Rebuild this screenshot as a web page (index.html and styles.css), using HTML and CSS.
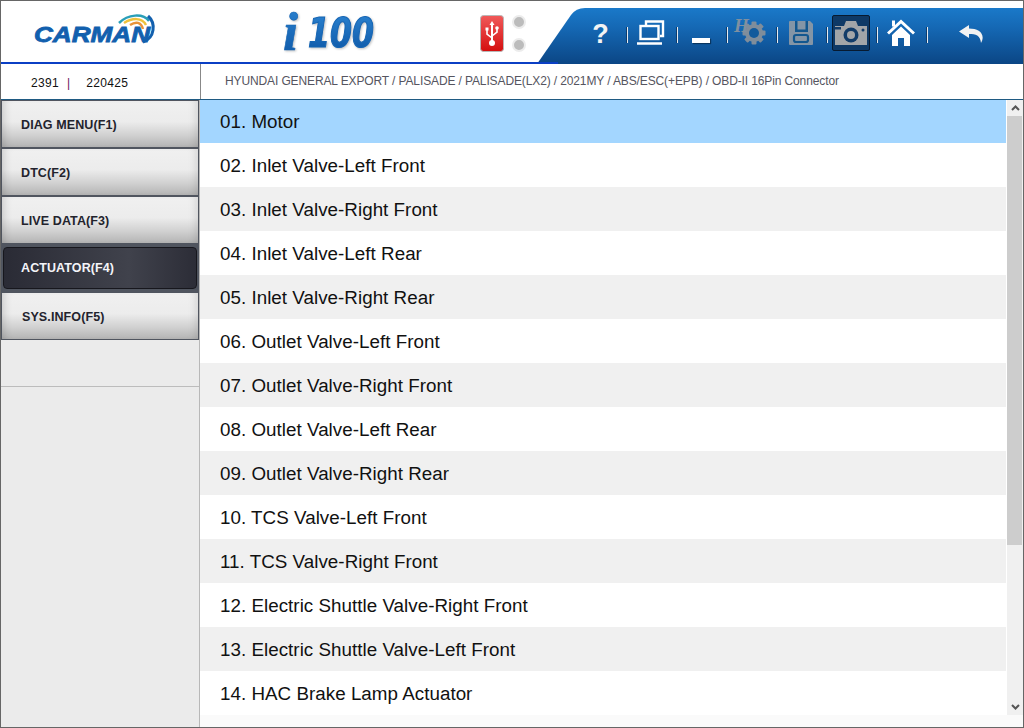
FILE: index.html
```html
<!DOCTYPE html>
<html lang="en">
<head>
<meta charset="utf-8">
<title>i100</title>
<link rel="stylesheet" href="styles.css">
</head>
<body>
<div class="window">
  <header class="header">
    <svg class="logo" width="124" height="32" viewBox="0 0 124 32">
      <path d="M86 9 C95 0 110 -1 116 7" class="arc-teal"/>
      <path d="M91 9 C99 4 109 3 113 11" class="arc-yellow"/>
      <path d="M97 11 C103 7 108 8 110 15" class="arc-orange"/>
      <path d="M115 2 C123 9 122 24 110 28" class="arc-blue"/>
      <text x="1" y="28" textLength="116" lengthAdjust="spacingAndGlyphs" class="logo-text">CARMAN</text>
    </svg>
    <svg class="product" width="102" height="60" viewBox="0 0 102 60">
      <defs>
        <linearGradient id="prodGrad" x1="0" y1="0" x2="0" y2="1">
          <stop offset="0" stop-color="#2c84d2"/>
          <stop offset="1" stop-color="#0c55a4"/>
        </linearGradient>
      </defs>
      <text x="1" y="48" class="prod-i" fill="url(#prodGrad)">i</text>
      <text x="26" y="45" textLength="66" lengthAdjust="spacingAndGlyphs" class="prod-num" fill="url(#prodGrad)">100</text>
    </svg>
    <svg class="usb" width="25" height="38" viewBox="0 0 25 38">
      <defs>
        <linearGradient id="usbGrad" x1="0" y1="0" x2="0" y2="1">
          <stop offset="0" stop-color="#f05a5a"/>
          <stop offset="1" stop-color="#d40e0e"/>
        </linearGradient>
      </defs>
      <rect x="0.5" y="0.5" width="23" height="36" rx="3" fill="url(#usbGrad)" stroke="#b8b8b8"/>
      <path d="M12 6 L9.5 10 H11 V26 H13 V10 H14.5 Z" fill="#fff"/>
      <path d="M12 23 L7 19 V15 M12 21 L17 17 V14" fill="none" stroke="#fff" stroke-width="1.6"/>
      <rect x="5.5" y="12.5" width="3" height="3" fill="#fff"/>
      <circle cx="17" cy="13" r="1.8" fill="#fff"/>
      <circle cx="12" cy="28" r="3" fill="#fff"/>
    </svg>
    <div class="leds"><span class="led"></span><span class="led"></span></div>
    <nav class="toolbar">
      <div class="tool sep"><span class="help">?</span></div>
      <div class="tool sep">
        <svg width="28" height="26" viewBox="0 0 28 26" fill="none" stroke="#fff" stroke-width="2.400">
          <path d="M9 5 V1.500 H26 V16 H23"/>
          <rect x="3.500" y="6" width="18" height="13"/>
          <path d="M0 23.500 H25" stroke-width="2.600"/>
        </svg>
      </div>
      <div class="tool sep"><span class="minimize"></span></div>
      <div class="tool sep">
        <svg width="38" height="36" viewBox="0 0 38 36">
          <g fill="#7f8d9b">
            <circle cx="22" cy="18" r="9"/>
            <rect x="19.500" y="6.500" width="5" height="23" rx="1"/>
            <rect x="10.500" y="15.500" width="23" height="5" rx="1"/>
            <rect x="19.500" y="6.500" width="5" height="23" rx="1" transform="rotate(45 22 18)"/>
            <rect x="19.500" y="6.500" width="5" height="23" rx="1" transform="rotate(-45 22 18)"/>
          </g>
          <circle cx="22" cy="18" r="5" fill="#125a9c"/>
          <text x="2" y="17" class="gear-h">H</text>
        </svg>
      </div>
      <div class="tool sep">
        <svg width="26" height="26" viewBox="0 0 26 26">
          <path d="M1 2 Q1 1 2 1 H22 L25 4 V24 Q25 25 24 25 H2 Q1 25 1 24 Z" fill="#8495a6"/>
          <rect x="7" y="1" width="13" height="11" fill="#13578f"/>
          <rect x="9.500" y="1" width="8" height="8.500" fill="#8495a6"/>
          <rect x="6" y="15" width="14" height="7" rx="2" fill="#8495a6" stroke="#13578f" stroke-width="2.200"/>
        </svg>
      </div>
      <div class="tool sep">
        <div class="cam-btn">
          <svg width="32" height="26" viewBox="0 0 32 26">
            <path d="M0 6 H9 L11 1 H21 L23 6 H32 V25 H0 Z" fill="#a2a5a8"/>
            <rect x="0" y="7" width="6" height="2.500" fill="#123c69"/>
            <circle cx="16" cy="15" r="7.500" fill="#123c69"/>
            <circle cx="16" cy="15" r="4" fill="#a2a5a8"/>
            <circle cx="28" cy="10" r="1.500" fill="#123c69"/>
          </svg>
        </div>
      </div>
      <div class="tool sep">
        <svg width="28" height="28" viewBox="0 0 28 28">
          <path d="M1 14.500 L14 2.500 L27 14.500" fill="none" stroke="#fff" stroke-width="3"/>
          <rect x="5" y="1.500" width="3" height="6" fill="#fff"/>
          <path d="M5 16 L14 7.500 L23 16 V27 H17 V19 H11 V27 H5 Z" fill="#fff"/>
        </svg>
      </div>
      <div class="tool back">
        <svg class="back-icon" width="26" height="20" viewBox="0 0 26 20">
          <path d="M10 0 L0 6.500 L10 13 V9 C17 9 21 10 22 18 C27 9 20 3.500 10 3.500 Z" fill="#f2f2f2"/>
        </svg>
      </div>
    </nav>
  </header>

  <div class="info">
    <div class="info-left">
      <span>2391</span><span class="pipe">|</span><span>220425</span>
    </div>
    <div class="crumb">HYUNDAI GENERAL EXPORT / PALISADE / PALISADE(LX2) / 2021MY / ABS/ESC(+EPB) / OBD-II 16Pin Connector</div>
  </div>

  <div class="content">
    <aside class="sidebar">
      <div class="menu">
        <div class="menu-item">DIAG MENU(F1)</div>
        <div class="menu-item">DTC(F2)</div>
        <div class="menu-item">LIVE DATA(F3)</div>
        <div class="menu-item active"><span class="active-inner">ACTUATOR(F4)</span></div>
        <div class="menu-item shifted">SYS.INFO(F5)</div>
      </div>
      <div class="side-gap"></div>
    </aside>
    <main class="main">
      <div class="list-wrap">
        <ul class="list">
          <li class="row selected">01. Motor</li>
          <li class="row">02. Inlet Valve-Left Front</li>
          <li class="row">03. Inlet Valve-Right Front</li>
          <li class="row">04. Inlet Valve-Left Rear</li>
          <li class="row">05. Inlet Valve-Right Rear</li>
          <li class="row">06. Outlet Valve-Left Front</li>
          <li class="row">07. Outlet Valve-Right Front</li>
          <li class="row">08. Outlet Valve-Left Rear</li>
          <li class="row">09. Outlet Valve-Right Rear</li>
          <li class="row">10. TCS Valve-Left Front</li>
          <li class="row">11. TCS Valve-Right Front</li>
          <li class="row">12. Electric Shuttle Valve-Right Front</li>
          <li class="row">13. Electric Shuttle Valve-Left Front</li>
          <li class="row">14. HAC Brake Lamp Actuator</li>
        </ul>
        <div class="scrollbar">
          <div class="arrow">
            <svg width="9" height="6" viewBox="0 0 9 6"><path d="M1 5 L4.500 1.500 L8 5" fill="none" stroke="#555" stroke-width="2"/></svg>
          </div>
          <div class="thumb"></div>
          <div class="track"></div>
          <div class="arrow">
            <svg width="9" height="6" viewBox="0 0 9 6"><path d="M1 1 L4.500 4.500 L8 1" fill="none" stroke="#555" stroke-width="2"/></svg>
          </div>
        </div>
      </div>
      <div class="strip"></div>
    </main>
  </div>
</div>
</body>
</html>
```

FILE: styles.css
```css
* { box-sizing: border-box; }
html, body { margin: 0; padding: 0; }
body { font-family: "Liberation Sans", Arial, sans-serif; background: #fff; }

.window {
  width: 1024px;
  height: 728px;
  border: 1px solid #666;
  display: flex;
  flex-direction: column;
  overflow: hidden;
  background: #fff;
}

/* header */
.header {
  position: relative;
  height: 63px;
  flex: none;
  display: flex;
  align-items: flex-start;
  background: #fff;
}
.header::after {
  content: "";
  position: absolute;
  left: 0;
  bottom: 0;
  width: 557px;
  height: 2px;
  background: #0b3fc4;
}
.logo { margin: 13px 0 0 32px; flex: none; overflow: visible; }
.logo-text {
  font-family: "Liberation Sans", sans-serif;
  font-weight: 700;
  font-style: italic;
  font-size: 22px;
  fill: #1260ae;
  stroke: #1260ae;
  stroke-width: 0.8px;
}
.arc-teal { fill: none; stroke: #2a9fb8; stroke-width: 2.500; }
.arc-yellow { fill: none; stroke: #eec23c; stroke-width: 2.500; }
.arc-orange { fill: none; stroke: #e8923a; stroke-width: 2.500; }
.arc-blue { fill: none; stroke: #1260ae; stroke-width: 3; }
.product {
  margin: 1px 0 0 125px;
  flex: none;
  overflow: visible;
  filter: drop-shadow(1px 1px 1px rgba(0,0,0,.25));
}
.prod-i {
  font-family: "Liberation Serif", serif;
  font-weight: 700;
  font-style: italic;
  font-size: 54px;
  stroke: #1565b4;
  stroke-width: 0.6px;
}
.prod-num {
  font-family: "DejaVu Sans", sans-serif;
  font-weight: 700;
  font-style: oblique;
  font-size: 40px;
  stroke: #1565b4;
  stroke-width: 1.200px;
}
.usb { margin: 14px 0 0 96px; flex: none; }
.leds {
  margin: 14px 0 0 7px;
  flex: none;
  display: flex;
  flex-direction: column;
  gap: 9px;
}
.led {
  width: 14px;
  height: 14px;
  border-radius: 50%;
  background: #bcbcbc;
  border: 2px solid #ececec;
}
.toolbar {
  margin: 7px 0 0 11px;
  flex: 1;
  height: 56px;
  display: flex;
  align-items: flex-start;
  padding: 7px 0 0 41px;
  background: linear-gradient(#1a79c9 0%, #1568b4 35%, #0b4685 100%);
  clip-path: path("M0 56 L34 7 Q39 0 48 0 L486 0 L486 56 Z");
}
.tool {
  position: relative;
  width: 50px;
  height: 36px;
  padding-right: 5px;
  display: flex;
  align-items: center;
  justify-content: center;
  flex: none;
}
.sep::after {
  content: "";
  position: absolute;
  right: 0;
  top: 12px;
  width: 1px;
  height: 16px;
  background: #e6ebf0;
  box-shadow: -1px 0 0 #0d3c6e;
}
.help {
  font-size: 27px;
  font-weight: 700;
  color: #f4f4f4;
  line-height: 36px;
  padding-top: 1px;
}
.minimize {
  width: 18px;
  height: 5px;
  margin-top: 14px;
  background: #fff;
  box-shadow: 1px 1px 1px rgba(0,0,0,.4);
}
.gear-h {
  font-family: "Liberation Serif", serif;
  font-style: italic;
  font-weight: 700;
  font-size: 19px;
  fill: #8090a0;
}
.cam-btn {
  width: 38px;
  height: 36px;
  flex: none;
  display: flex;
  align-items: center;
  justify-content: center;
  background: #0e3966;
  border: 1px solid #071a30;
  border-radius: 2px;
}
.back { width: 92px; }
.back-icon { margin-top: 3px; }

/* info row */
.info {
  height: 36px;
  flex: none;
  display: flex;
  border-bottom: 1px solid #1f5a82;
  font-size: 12px;
}
.info-left {
  width: 200px;
  border-right: 1px solid #888;
  display: flex;
  align-items: center;
  padding: 2px 0 0 30px;
  color: #111;
  letter-spacing: .3px;
}
.pipe { color: #6a1060; margin: 0 16px 0 8px; }
.crumb {
  padding: 0 0 0 24px;
  line-height: 34px;
  color: #555560;
  letter-spacing: -.12px;
}

/* content */
.content { flex: 1; display: flex; min-height: 0; }
.sidebar {
  width: 199px;
  flex: none;
  background: #ebebeb;
  border-right: 1px solid #b8b8b8;
}
.menu {
  background: #50555f;
  padding: 1px;
  display: flex;
  flex-direction: column;
  gap: 2px;
}
.menu-item {
  height: 46px;
  display: flex;
  align-items: center;
  padding: 1px 0 0 19px;
  font-size: 12.500px;
  letter-spacing: .1px;
  font-weight: 700;
  color: #23232d;
  background: linear-gradient(#f0f0f0 0%, #ececec 45%, #d0d0d0 75%, #b4b4b4 100%);
  box-shadow: inset 8px 0 8px -6px rgba(0,0,0,.16), inset -8px 0 8px -6px rgba(0,0,0,.12);
}
.shifted { padding-left: 20px; }
.active {
  padding: 2px 1px;
  background: none;
  box-shadow: none;
  color: #f4f4f8;
}
.active-inner {
  width: 100%;
  height: 100%;
  display: flex;
  align-items: center;
  padding-left: 17px;
  border: 1px solid #17171d;
  border-radius: 4px;
  background: linear-gradient(90deg, #2a2b35 0%, #40424c 65%, #2c2d37 100%);
}
.side-gap { height: 47px; border-bottom: 1px solid #bcbcbc; }

/* list */
.main { flex: 1; display: flex; flex-direction: column; min-width: 0; background: #fafafa; }
.list-wrap { display: flex; height: 615px; flex: none; background: #fff; }
.list { list-style: none; margin: 0; padding: 0; flex: 1; background: #fff; }
.row {
  height: 44px;
  display: flex;
  align-items: center;
  padding: 1px 0 0 20px;
  font-size: 18.800px;
  letter-spacing: .03px;
  color: #111;
  background: #fff;
}
.row:first-child { height: 43px; padding: 0 0 0 20px; }
.row:nth-child(odd) { background: #f0f0f0; }
.row.selected { background: #a3d6ff; }
.scrollbar {
  width: 16px;
  flex: none;
  display: flex;
  flex-direction: column;
  background: #f0f0f0;
  margin-left: 1px;
}
.arrow {
  height: 16px;
  flex: none;
  display: flex;
  align-items: center;
  justify-content: center;
}
.thumb { height: 429px; flex: none; background: #cdcdcd; margin-right: 1px; }
.track { flex: 1; }
.strip { flex: 1; background: #fafafa; }
```
